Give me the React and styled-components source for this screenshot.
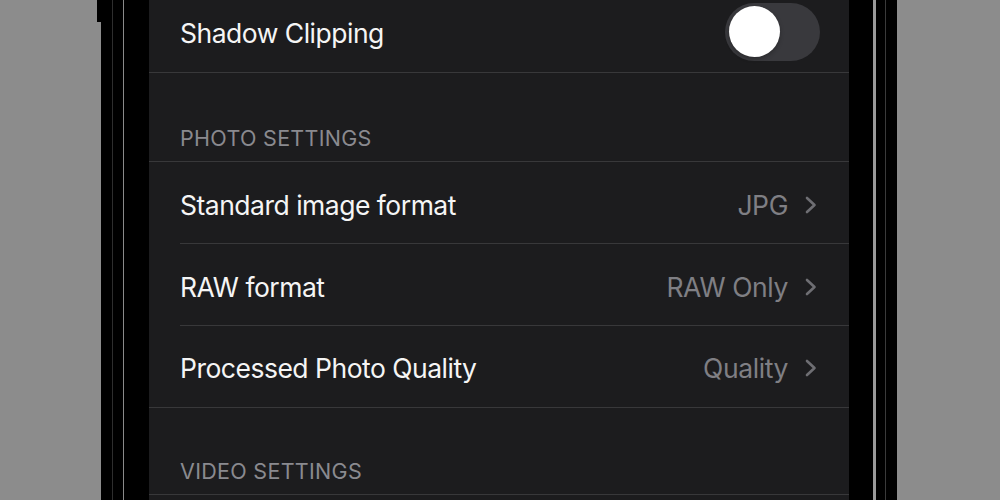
import React, { useState } from 'react'
import styled, { createGlobalStyle } from 'styled-components'

const GlobalStyle = createGlobalStyle`
  html, body {
    margin: 0;
    padding: 0;
    background: #8c8c8c;
  }
  body {
    font-family: Inter, "Liberation Sans", Arial, sans-serif;
  }
`

const Page = styled.div`
  width: 1000px;
  height: 500px;
  overflow: hidden;
  display: flex;
  justify-content: flex-start;
  padding-left: 101px;
  box-sizing: border-box;
`

const Phone = styled.div`
  position: relative;
  width: 796px;
  height: 500px;
  padding: 0 48px;
  box-sizing: border-box;
  background:
    linear-gradient(90deg,
      transparent 11px, #2e2e2e 11px, #2e2e2e 12.5px, transparent 12.5px,
      transparent 21.7px, #8a8a8a 21.7px, #8a8a8a 23.5px, transparent 23.5px,
      transparent 771.7px, #9a9a9a 771.7px, #9a9a9a 775.5px, transparent 775.5px,
      transparent 784px, #3a3a3a 784px, #3a3a3a 785px, transparent 785px),
    #000;
`

const SideButton = styled.div`
  position: absolute;
  left: -4px;
  top: 0;
  width: 4px;
  height: 22px;
  background: #000;
`

const Screen = styled.div`
  height: 500px;
  background: #1c1c1e;
  overflow: hidden;
  color: #fff;
`

const List = styled.div`
  margin-top: -9px;
  display: flex;
  flex-direction: column;
`

const Row = styled.div`
  height: ${p => p.$h || 82}px;
  box-sizing: border-box;
  display: flex;
  align-items: center;
  justify-content: space-between;
  padding: 0 ${p => p.$right ?? 32}px 0 31px;
  border-bottom: 1px solid #38383a;
  position: relative;
  ${p => p.$inset && `
    border-bottom: none;
    &::after {
      content: '';
      position: absolute;
      left: 31px;
      right: 0;
      bottom: 0;
      height: 1px;
      background: #38383a;
    }
  `}
`

const Label = styled.span`
  font-size: 26.5px;
  letter-spacing: -0.5px;
  color: #f5f5f5;
  padding-top: 3px;
`

const Value = styled.span`
  display: flex;
  align-items: center;
  gap: 17px;
  font-size: 26.5px;
  letter-spacing: -0.4px;
  color: #7f7f84;
  padding-top: 3px;
`

const SectionHeader = styled.div`
  height: ${p => p.$h || 89}px;
  box-sizing: border-box;
  display: flex;
  align-items: flex-end;
  padding: 0 31px 12px;
  font-size: 21.5px;
  line-height: 22px;
  letter-spacing: 0.3px;
  color: #8a8a8f;
  border-bottom: 1px solid #38383a;
`

const Track = styled.button`
  width: 95px;
  height: 58px;
  border-radius: 29px;
  border: none;
  padding: 0 3.5px;
  background: ${p => (p.$on ? '#30d158' : '#39393d')};
  display: flex;
  align-items: center;
  justify-content: ${p => (p.$on ? 'flex-end' : 'flex-start')};
  cursor: pointer;
`

const Knob = styled.span`
  width: 51px;
  height: 51px;
  border-radius: 50%;
  background: #fff;
  box-shadow: 0 2px 4px rgba(0, 0, 0, 0.25);
`

function Chevron() {
  return (
    <svg width="12" height="18" viewBox="0 0 12 18">
      <path d="M2 2 L9.5 9 L2 16" fill="none" stroke="#6e6e73" strokeWidth="2.6"
        strokeLinecap="round" strokeLinejoin="round" />
    </svg>
  )
}

function App() {
  const [shadow, setShadow] = useState(false)
  const rows = [
    { label: 'Standard image format', value: 'JPG', inset: true },
    { label: 'RAW format', value: 'RAW Only', inset: true },
    { label: 'Processed Photo Quality', value: 'Quality' },
  ]
  return (
    <Page>
      <GlobalStyle />
      <Phone>
        <SideButton />
        <Screen>
          <List>
            <Row $h={82} $right={29}>
              <Label>Shadow Clipping</Label>
              <Track $on={shadow} onClick={() => setShadow(!shadow)}>
                <Knob />
              </Track>
            </Row>
            <SectionHeader>PHOTO SETTINGS</SectionHeader>
            {rows.map(r => (
              <Row key={r.label} $inset={r.inset}>
                <Label>{r.label}</Label>
                <Value>{r.value}<Chevron /></Value>
              </Row>
            ))}
            <SectionHeader $h={87}>VIDEO SETTINGS</SectionHeader>
          </List>
        </Screen>
      </Phone>
    </Page>
  )
}

export default App
